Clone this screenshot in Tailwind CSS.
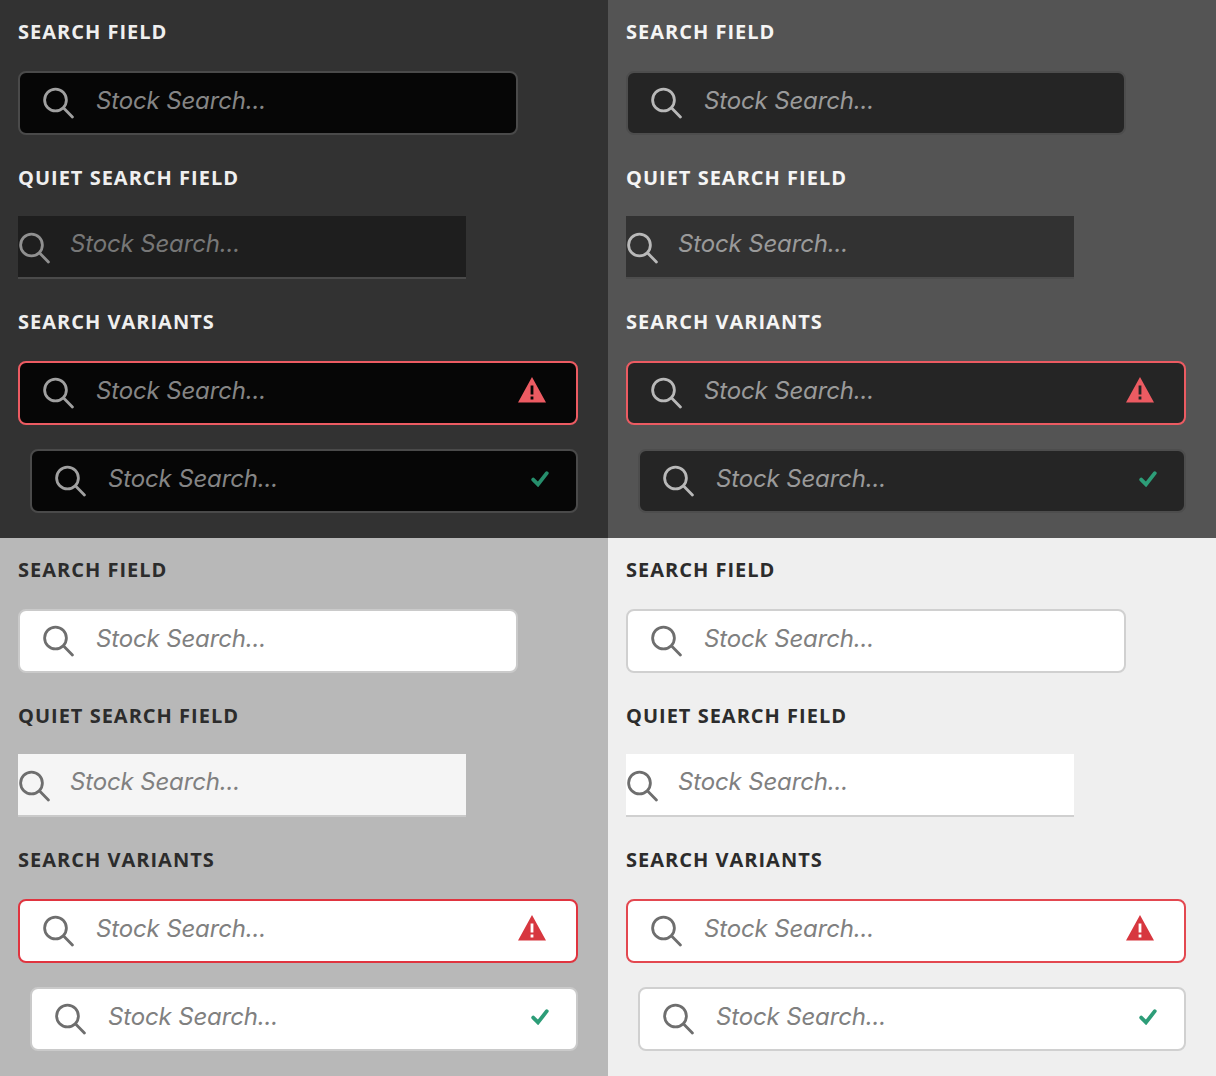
<!DOCTYPE html>
<html lang="en">
<head>
  <meta charset="UTF-8" />
  <title>Search Field</title>
  <script src="https://cdn.jsdelivr.net/npm/@tailwindcss/browser@4"></script>
</head>
<body class="bg-[#efefef]">
  <!-- shared icons -->
  <svg class="hidden">
    <symbol id="search" viewBox="0 0 32 32">
      <circle cx="13.5" cy="13" r="10.9" fill="none" stroke="currentColor" stroke-width="2.8" />
      <path d="M21.6 21l8.8 9" fill="none" stroke="currentColor" stroke-width="2.8" stroke-linecap="round" />
    </symbol>
    <symbol id="alert" viewBox="0 0 28 26">
      <path fill-rule="evenodd" fill="currentColor" d="M14 0L28 25.5H0ZM12.6 8.5V17.5H15.4V8.5ZM12.6 19.5V22.5H15.4V19.5Z" />
    </symbol>
    <symbol id="check" viewBox="0 0 18 16">
      <path d="M2.2 8.6l4.8 4.8L15.8 2.2" fill="none" stroke="currentColor" stroke-width="3.8" stroke-linecap="round" stroke-linejoin="miter" />
    </symbol>
  </svg>

  <div class="grid grid-cols-2 w-[1216px] h-[1076px] overflow-hidden font-['Open_Sans',sans-serif]">

    <!-- darkest -->
    <section class="h-[538px] bg-[#323232] pl-[18px] pt-5 text-[#efefef]">
      <h2 class="h-6 text-[20px] leading-6 font-bold tracking-[1px]">SEARCH FIELD</h2>
      <div class="mt-[27px] flex items-center w-[500px] h-16 pl-[22px] rounded-lg border-2 border-[#4a4a4a] bg-[#060606]">
        <svg class="w-8 h-8 shrink-0 text-[#a0a0a0]"><use href="#search" /></svg>
        <span class="ml-[22px] -mt-[4px] text-[24px] tracking-[-0.15px] italic font-['Inter',sans-serif] text-[#858585]">Stock Search...</span>
      </div>
      <h2 class="mt-[31px] h-6 text-[20px] leading-6 font-bold tracking-[1px]">QUIET SEARCH FIELD</h2>
      <div class="mt-[26px] flex items-center w-[448px] h-[63px] border-b-2 border-[#4a4a4a] bg-[#1e1e1e]">
        <svg class="w-8 h-8 shrink-0 mt-[3px] text-[#909090]"><use href="#search" /></svg>
        <span class="ml-5 -mt-[6px] text-[24px] tracking-[-0.15px] italic font-['Inter',sans-serif] text-[#777777]">Stock Search...</span>
      </div>
      <h2 class="mt-[31px] h-6 text-[20px] leading-6 font-bold tracking-[1px]">SEARCH VARIANTS</h2>
      <div class="mt-[27px] flex items-center w-[560px] h-16 pl-[22px] rounded-lg border-2 border-[#ec5b62] bg-[#060606]">
        <svg class="w-8 h-8 shrink-0 text-[#a0a0a0]"><use href="#search" /></svg>
        <span class="ml-[22px] -mt-[4px] text-[24px] tracking-[-0.15px] italic font-['Inter',sans-serif] text-[#858585]">Stock Search...</span>
        <svg class="ml-auto mr-[30px] -mt-[7px] w-7 h-[26px] text-[#ec5b62]"><use href="#alert" /></svg>
      </div>
      <div class="mt-6 ml-3 flex items-center w-[548px] h-16 pl-[22px] rounded-lg border-2 border-[#4a4a4a] bg-[#060606]">
        <svg class="w-8 h-8 shrink-0 text-[#a0a0a0]"><use href="#search" /></svg>
        <span class="ml-[22px] -mt-[4px] text-[24px] tracking-[-0.15px] italic font-['Inter',sans-serif] text-[#858585]">Stock Search...</span>
        <svg class="ml-auto mr-[27px] -mt-[4px] w-[18px] h-4 text-[#268e6c]"><use href="#check" /></svg>
      </div>
    </section>

    <!-- dark -->
    <section class="h-[538px] bg-[#545454] pl-[18px] pt-5 text-[#f5f5f5]">
      <h2 class="h-6 text-[20px] leading-6 font-bold tracking-[1px]">SEARCH FIELD</h2>
      <div class="mt-[27px] flex items-center w-[500px] h-16 pl-[22px] rounded-lg border-2 border-[#4d4d4d] bg-[#252525]">
        <svg class="w-8 h-8 shrink-0 text-[#b9b9b9]"><use href="#search" /></svg>
        <span class="ml-[22px] -mt-[4px] text-[24px] tracking-[-0.15px] italic font-['Inter',sans-serif] text-[#9a9a9a]">Stock Search...</span>
      </div>
      <h2 class="mt-[31px] h-6 text-[20px] leading-6 font-bold tracking-[1px]">QUIET SEARCH FIELD</h2>
      <div class="mt-[26px] flex items-center w-[448px] h-[63px] border-b-2 border-[#4d4d4d] bg-[#323232]">
        <svg class="w-8 h-8 shrink-0 mt-[3px] text-[#b9b9b9]"><use href="#search" /></svg>
        <span class="ml-5 -mt-[6px] text-[24px] tracking-[-0.15px] italic font-['Inter',sans-serif] text-[#9a9a9a]">Stock Search...</span>
      </div>
      <h2 class="mt-[31px] h-6 text-[20px] leading-6 font-bold tracking-[1px]">SEARCH VARIANTS</h2>
      <div class="mt-[27px] flex items-center w-[560px] h-16 pl-[22px] rounded-lg border-2 border-[#ec5b62] bg-[#252525]">
        <svg class="w-8 h-8 shrink-0 text-[#b9b9b9]"><use href="#search" /></svg>
        <span class="ml-[22px] -mt-[4px] text-[24px] tracking-[-0.15px] italic font-['Inter',sans-serif] text-[#9a9a9a]">Stock Search...</span>
        <svg class="ml-auto mr-[30px] -mt-[7px] w-7 h-[26px] text-[#ec5b62]"><use href="#alert" /></svg>
      </div>
      <div class="mt-6 ml-3 flex items-center w-[548px] h-16 pl-[22px] rounded-lg border-2 border-[#4d4d4d] bg-[#252525]">
        <svg class="w-8 h-8 shrink-0 text-[#b9b9b9]"><use href="#search" /></svg>
        <span class="ml-[22px] -mt-[4px] text-[24px] tracking-[-0.15px] italic font-['Inter',sans-serif] text-[#9a9a9a]">Stock Search...</span>
        <svg class="ml-auto mr-[27px] -mt-[4px] w-[18px] h-4 text-[#2d9d78]"><use href="#check" /></svg>
      </div>
    </section>

    <!-- light -->
    <section class="h-[538px] bg-[#b8b8b8] pl-[18px] pt-5 text-[#2c2c2c]">
      <h2 class="h-6 text-[20px] leading-6 font-bold tracking-[1px]">SEARCH FIELD</h2>
      <div class="mt-[27px] flex items-center w-[500px] h-16 pl-[22px] rounded-lg border-2 border-[#cacaca] bg-white">
        <svg class="w-8 h-8 shrink-0 text-[#6e6e6e]"><use href="#search" /></svg>
        <span class="ml-[22px] -mt-[4px] text-[24px] tracking-[-0.15px] italic font-['Inter',sans-serif] text-[#808080]">Stock Search...</span>
      </div>
      <h2 class="mt-[31px] h-6 text-[20px] leading-6 font-bold tracking-[1px]">QUIET SEARCH FIELD</h2>
      <div class="mt-[26px] flex items-center w-[448px] h-[63px] border-b-2 border-[#cacaca] bg-[#f5f5f5]">
        <svg class="w-8 h-8 shrink-0 mt-[3px] text-[#6e6e6e]"><use href="#search" /></svg>
        <span class="ml-5 -mt-[6px] text-[24px] tracking-[-0.15px] italic font-['Inter',sans-serif] text-[#808080]">Stock Search...</span>
      </div>
      <h2 class="mt-[31px] h-6 text-[20px] leading-6 font-bold tracking-[1px]">SEARCH VARIANTS</h2>
      <div class="mt-[27px] flex items-center w-[560px] h-16 pl-[22px] rounded-lg border-2 border-[#e0343f] bg-white">
        <svg class="w-8 h-8 shrink-0 text-[#6e6e6e]"><use href="#search" /></svg>
        <span class="ml-[22px] -mt-[4px] text-[24px] tracking-[-0.15px] italic font-['Inter',sans-serif] text-[#808080]">Stock Search...</span>
        <svg class="ml-auto mr-[30px] -mt-[7px] w-7 h-[26px] text-[#d7373f]"><use href="#alert" /></svg>
      </div>
      <div class="mt-6 ml-3 flex items-center w-[548px] h-16 pl-[22px] rounded-lg border-2 border-[#cacaca] bg-white">
        <svg class="w-8 h-8 shrink-0 text-[#6e6e6e]"><use href="#search" /></svg>
        <span class="ml-[22px] -mt-[4px] text-[24px] tracking-[-0.15px] italic font-['Inter',sans-serif] text-[#808080]">Stock Search...</span>
        <svg class="ml-auto mr-[27px] -mt-[4px] w-[18px] h-4 text-[#2d9d78]"><use href="#check" /></svg>
      </div>
    </section>

    <!-- lightest -->
    <section class="h-[538px] bg-[#efefef] pl-[18px] pt-5 text-[#2c2c2c]">
      <h2 class="h-6 text-[20px] leading-6 font-bold tracking-[1px]">SEARCH FIELD</h2>
      <div class="mt-[27px] flex items-center w-[500px] h-16 pl-[22px] rounded-lg border-2 border-[#d0d0d0] bg-white">
        <svg class="w-8 h-8 shrink-0 text-[#6e6e6e]"><use href="#search" /></svg>
        <span class="ml-[22px] -mt-[4px] text-[24px] tracking-[-0.15px] italic font-['Inter',sans-serif] text-[#808080]">Stock Search...</span>
      </div>
      <h2 class="mt-[31px] h-6 text-[20px] leading-6 font-bold tracking-[1px]">QUIET SEARCH FIELD</h2>
      <div class="mt-[26px] flex items-center w-[448px] h-[63px] border-b-2 border-[#d0d0d0] bg-white">
        <svg class="w-8 h-8 shrink-0 mt-[3px] text-[#6e6e6e]"><use href="#search" /></svg>
        <span class="ml-5 -mt-[6px] text-[24px] tracking-[-0.15px] italic font-['Inter',sans-serif] text-[#808080]">Stock Search...</span>
      </div>
      <h2 class="mt-[31px] h-6 text-[20px] leading-6 font-bold tracking-[1px]">SEARCH VARIANTS</h2>
      <div class="mt-[27px] flex items-center w-[560px] h-16 pl-[22px] rounded-lg border-2 border-[#e34850] bg-white">
        <svg class="w-8 h-8 shrink-0 text-[#6e6e6e]"><use href="#search" /></svg>
        <span class="ml-[22px] -mt-[4px] text-[24px] tracking-[-0.15px] italic font-['Inter',sans-serif] text-[#808080]">Stock Search...</span>
        <svg class="ml-auto mr-[30px] -mt-[7px] w-7 h-[26px] text-[#d7373f]"><use href="#alert" /></svg>
      </div>
      <div class="mt-6 ml-3 flex items-center w-[548px] h-16 pl-[22px] rounded-lg border-2 border-[#d0d0d0] bg-white">
        <svg class="w-8 h-8 shrink-0 text-[#6e6e6e]"><use href="#search" /></svg>
        <span class="ml-[22px] -mt-[4px] text-[24px] tracking-[-0.15px] italic font-['Inter',sans-serif] text-[#808080]">Stock Search...</span>
        <svg class="ml-auto mr-[27px] -mt-[4px] w-[18px] h-4 text-[#2d9d78]"><use href="#check" /></svg>
      </div>
    </section>
  </div>
</body>
</html>
